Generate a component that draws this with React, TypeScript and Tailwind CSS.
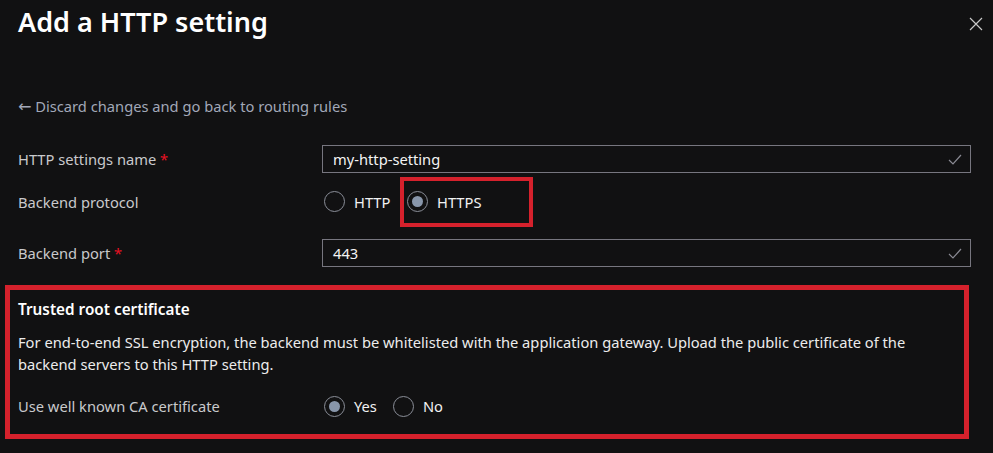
import React from "react";

const font = { fontFamily: '"Noto Sans", "Open Sans", sans-serif' };

function Radio({ checked, label }: { checked?: boolean; label: string }) {
  return (
    <div className="flex items-center gap-[9px]">
      <div className="w-[21px] h-[21px] rounded-full border border-[#8a8e98] flex items-center justify-center">
        {checked && <div className="w-[11px] h-[11px] rounded-full bg-[#8896aa]" />}
      </div>
      <span className="text-[14.7px] text-[#f2f2f2]">{label}</span>
    </div>
  );
}

function Check() {
  return (
    <svg width="14" height="12" viewBox="0 0 14 12" className="shrink-0">
      <path d="M1 7 L5 11 L13 2" fill="none" stroke="#8a8a93" strokeWidth="1.2" />
    </svg>
  );
}

function Input({ value }: { value: string }) {
  return (
    <div className="h-[28px] border border-[#77767f] flex items-center pl-[10px] pr-[8px] justify-between">
      <span className="text-[14.7px] text-[#f4f4f4]">{value}</span>
      <Check />
    </div>
  );
}

export default function App() {
  return (
    <div className="w-[993px] h-[453px] bg-[#111112] overflow-hidden relative" style={font}>
      <div className="flex justify-between items-start pl-[18px] pr-[10px] pt-[2px]">
        <h1 className="text-[27px] font-semibold text-white leading-[40px]">Add a HTTP setting</h1>
        <svg width="14" height="14" viewBox="0 0 14 14" className="mt-[15px]">
          <path d="M1 1 L13 13 M13 1 L1 13" stroke="#c8c8c8" strokeWidth="1.2" />
        </svg>
      </div>

      <div className="pl-[18px] mt-[54px] text-[14.7px] text-[#a2a8b8] leading-[20px]">
        <span className="text-[16px]" style={{ fontFamily: '"DejaVu Sans", sans-serif' }}>←</span> Discard changes and go back to routing rules
      </div>

      <div className="mt-[28px] flex flex-col">
        <div className="flex items-center h-[28px] pr-[22px]">
          <div className="w-[322px] pl-[18px] text-[14.7px] text-[#c9c9cc]">
            HTTP settings name <span className="text-[#e81123]">*</span>
          </div>
          <div className="flex-1">
            <Input value="my-http-setting" />
          </div>
        </div>

        <div className="flex items-center h-[58px] pr-[22px]">
          <div className="w-[324px] pl-[18px] text-[14.7px] text-[#c9c9cc]">Backend protocol</div>
          <div className="flex items-center">
            <div className="w-[76px]">
              <Radio label="HTTP" />
            </div>
            <div className="border-[4px] border-[#d5212c] h-[50px] w-[133px] flex items-center pl-[3px]">
              <Radio checked label="HTTPS" />
            </div>
          </div>
        </div>

        <div className="flex items-center h-[28px] pr-[22px] mt-[8px]">
          <div className="w-[322px] pl-[18px] text-[14.7px] text-[#c9c9cc]">
            Backend port <span className="text-[#e81123]">*</span>
          </div>
          <div className="flex-1">
            <Input value="443" />
          </div>
        </div>
      </div>

      <div className="ml-[5px] mt-[18px] w-[964px] h-[154px] border-[5px] border-[#d5212c] pl-[8px] pr-[20px] pt-[9px]">
        <div className="text-[15.3px] font-semibold text-white leading-[20px]">Trusted root certificate</div>
        <p className="mt-[12px] text-[14.7px] text-[#ececec] leading-[22px]">
          For end-to-end SSL encryption, the backend must be whitelisted with the application gateway. Upload the public certificate of the backend servers to this HTTP setting.
        </p>
        <div className="flex items-center mt-[20px]">
          <div className="w-[306px] text-[14.7px] text-[#c9c9cc]">Use well known CA certificate</div>
          <div className="flex items-center gap-[16px]">
            <Radio checked label="Yes" />
            <Radio label="No" />
          </div>
        </div>
      </div>
    </div>
  );
}
